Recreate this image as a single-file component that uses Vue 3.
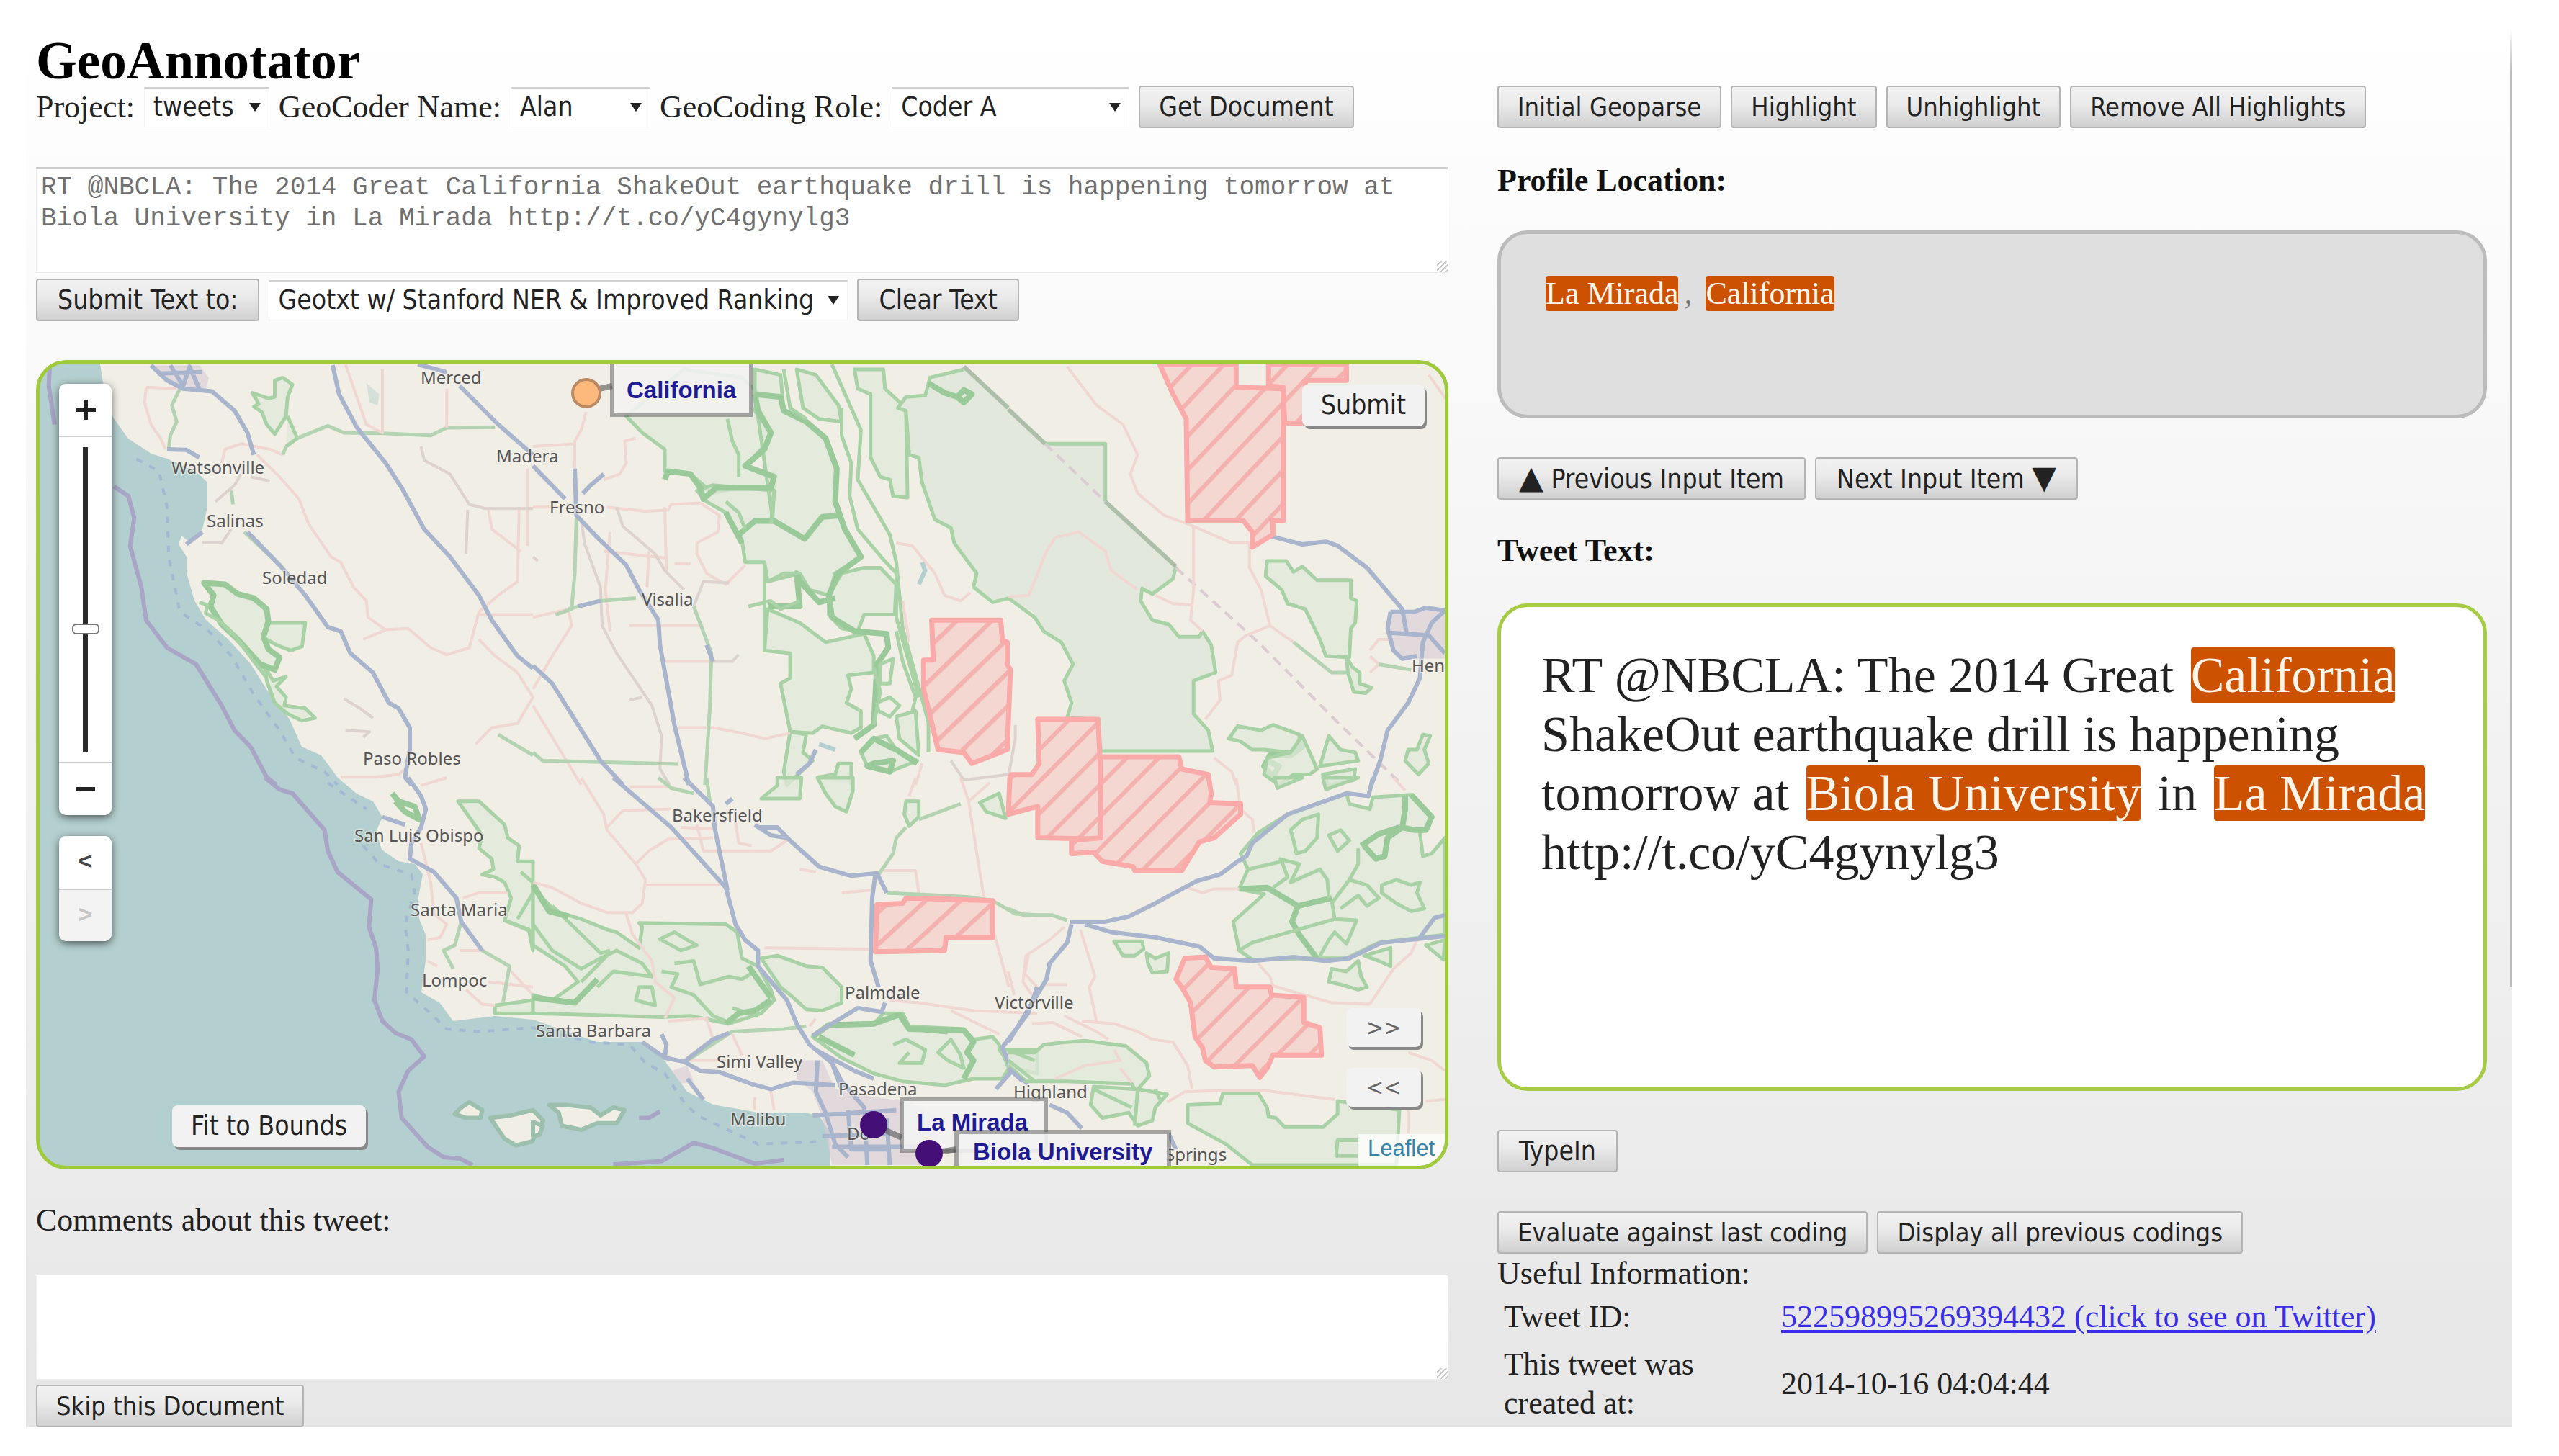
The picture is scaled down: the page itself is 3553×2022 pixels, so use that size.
<script setup>
import { ref } from 'vue'

const draft = ref('RT @NBCLA: The 2014 Great California ShakeOut earthquake drill is happening tomorrow at Biola University in La Mirada http://t.co/yC4gynylg3')
const comments = ref('')
const zoom = ref(40)

const coast = 'M139 506 L146 550 157 580 178 609 210 630 232 637 272 655 288 670 288 704 281 735 262 752 252 744 248 756 259 773 259 796 270 834 286 861 317 888 348 922 370 957 402 999 419 1037 446 1049 469 1080 495 1102 518 1113 531 1135 522 1155 530 1180 553 1196 576 1200 587 1214 580 1251 582 1276 591 1298 591 1334 585 1378 611 1393 629 1418 687 1411 740 1416 829 1447 892 1447 923 1473 941 1498 954 1516 990 1534 1052 1545 1115 1545 1137 1549 1151 1571 1153 1630 2020 1630 2020 490 139 490Z'

// Each tile keeps its own coordinate grid; origin and scale place it on the map.
const tiles = [
  {
    id: 'nw', origin: '40 490', scale: '.4464 .3827',
    shapes: [
      ['sea', 'M1050 110 L1090 150 1085 190 1060 180Z'],
      ['park', 'M765 100 L790 90 820 115 805 160 800 230 765 295 740 260 725 215 700 195 715 185 695 145 745 165 765 160Z'],
      ['park', 'M805 230 L820 270 835 310 800 340'],
      ['park', 'M545 835 L610 840 650 875 700 890 740 930 745 975 730 1030 745 1075 780 1105 765 1150 720 1140 650 1040 600 990 560 920 575 880Z'],
      ['park', 'M745 980 L860 980 850 1065 815 1080 770 1060 740 1040'],
      ['park', 'M735 1140 L760 1190 800 1175 770 1210 800 1250 795 1280 860 1290 890 1325 850 1335 805 1310 765 1270 740 1190Z'],
      ['parkbold', 'M545 835 L575 880 565 920 600 985 650 1040 720 1130 765 1150 780 1105 745 1075 730 1030 745 975 740 930 700 890 650 875 610 840Z'],
      ['parkline', 'M530 905 L555 915 550 945 590 970 640 1025 700 1120 740 1180'],
      ['green', 'M835 310 L930 265 980 290 1100 292 1250 300 1300 272 1450 270'],
      ['purple', 'M65 50 L62 120 80 260 M265 485 L310 520 328 600 315 700 350 850 365 970 430 1070 520 1130 600 1280 640 1370 690 1430 740 1540 770 1568'],
      ['dash', 'M335 385 L405 430 430 560 435 740 470 940 560 1010 630 1100 700 1240 780 1370 830 1470 920 1520 960 1568'],
      ['pink', 'M365 125 L360 180 380 260 410 310 425 350 M365 125 L460 130 M600 400 L610 350 660 330 750 350 790 370 M710 370 L780 450 840 530 870 620 940 740 970 760 1010 850 1050 900 1055 960 1110 1005 1040 1040 M1110 1005 L1180 1000 1250 1070 1300 1095 1370 1070 1400 940 1460 880 1520 830 1525 560 M985 42 L1050 260 1100 290 1100 60 M1300 272 L1300 130 M1550 420 L1550 700 M1430 570 L1440 640 1530 720 M1400 950 L1568 950 M1520 1160 L1568 1250 1520 1345 1440 1360 1390 1420 M1400 1040 L1450 1100 1520 1160 M970 1540 L1080 1540 1150 1530 1180 1500'],
      ['minor', 'M1220 340 L1230 390 1310 440 1370 550 1420 565 1568 565 M690 450 L750 465 M580 540 L640 480 660 440 M540 690 L600 690 630 640 M1365 570 L1360 730'],
      ['minor', 'M980 1255 L1030 1290 1070 1325 M985 1370 L1060 1375 1040 1395'],
      ['green', 'M435 350 L440 300 460 250 445 190 470 130 M670 650 L790 780 M1460 1385 L1568 1460 M635 550 L630 500 M800 340 L790 370'],
      ['city', 'M380 45 L430 100 480 130 550 140 560 90 530 45Z'],
      ['road', 'M380 45 L430 100 480 130 570 140 640 210 680 290 700 370 M430 350 L490 352 530 380 M440 45 L480 120 500 50 530 130 M400 75 L540 70 M490 695 L540 650'],
      ['road', 'M945 45 L965 150 1020 270 1110 400 1160 490 1230 640 1310 740 1400 880 1440 970 1520 1100 1568 1145 M1340 120 L1460 260 1568 370 M1210 42 L1300 70 M680 650 L780 770 860 880 930 995 970 1010 1000 1090 1070 1160 1120 1270 1150 1290 1185 1360 1185 1440 1170 1540 1190 1568']
    ]
  },
  {
    id: 'n', origin: '740 490', scale: '.4464 .3827',
    shapes: [
      ['park', 'M290 230 L340 290 410 350 410 430 440 430 490 440 540 490 550 510 640 490 750 500 750 440 700 430 660 410 710 350 740 290 690 210 700 145 650 90 470 60Z'],
      ['park', 'M690 60 L770 80 780 210 850 250 910 310 945 420 940 540 970 640 1020 740 940 800 920 880 860 860 830 800 730 830 720 760 660 760 650 680 600 580 540 540 510 500 560 480 750 500 745 600 690 150Z'],
      ['park', 'M820 60 L880 80 950 190 960 250 890 240 840 200Z'],
      ['park', 'M960 800 L1030 780 1080 780 1130 840 1125 950 1030 950 1010 1010 960 1000 920 950 920 880Z'],
      ['park', 'M730 930 L830 980 910 1050 1030 1020 1060 1100 1060 1160 980 1170 990 1220 975 1270 1020 1300 1020 1360 990 1380 900 1355 870 1380 800 1375 770 1200 800 1180 800 1090 720 1080Z'],
      ['park', 'M1000 60 L1090 60 1095 130 1160 200 1165 525 1120 520 1110 460 1080 450 1050 380 1050 150 1010 130Z'],
      ['area', 'M1135 200 L1160 160 1220 155 1235 90 1340 60 1568 310 1568 950 1480 890 1430 905 1370 850 1380 800 1310 690 1300 635 1250 605 1210 470 1200 380 1170 370 1160 210Z'],
      ['parkline', 'M1480 890 L1430 905 1370 850 1380 800 1310 690 1300 635 1250 605 1210 470 1200 380 1170 370 1160 210 1135 200 1160 160 1220 155 1235 90 1340 60'],
      ['park', 'M800 1375 L850 1385 840 1450 870 1480 790 1568 780 1520Z'],
      ['park', 'M1060 1400 L1100 1390 1130 1440 1195 1480 1110 1520 1040 1500 1020 1450Z'],
      ['park', 'M1130 1320 L1190 1300 1200 1460 1140 1400Z'],
      ['park', 'M885 1540 L940 1530 950 1490 990 1490 990 1568'],
      ['parkbold', 'M690 150 L770 160 780 210 850 250 910 310 945 420 940 540 970 640 1020 740 950 800 920 880 930 960 1000 1010 1100 1020 1105 1070 1070 1130 1060 1350 1000 1400'],
      ['parkbold', 'M410 460 L420 430 490 440 520 490 530 530 570 490 740 490 750 450 660 410 720 350 740 290 700 210 690 150'],
      ['parkbold', 'M640 660 L690 610 750 610 845 675 900 595 960 590 M730 920 L830 920 820 800 830 830 890 905 940 890 M600 580 L650 690'],
      ['parkline', 'M720 760 L720 1080 M730 830 L780 800 830 800 M670 920 L740 900 770 930 830 900 M740 620 L750 500 M600 540 L640 580 660 640 M605 240 L620 320 640 370 640 450'],
      ['parkline', 'M780 60 L800 200 850 240 M930 42 L1020 280 1010 460 1110 660 1130 760 1150 1000 1230 1340 1230 1450 M960 200 L960 300 990 400 985 520 1010 640 1090 750 1130 800 1130 960 1200 1250 M1060 1350 L1080 1230 1060 1140 M1080 1130 L1120 1110 1110 1200 1080 1200Z M1070 1270 L1110 1250 1140 1280 1110 1320 1075 1300Z M1130 1010 L1150 1120 1190 1250 1180 1300'],
      ['parkbold', 'M1230 110 L1280 145 1320 160 1340 180 1365 150 1340 135 1320 160 M1020 1450 L1060 1400 1110 1430 1130 1440 1195 1490 M1040 1500 L1110 1520 1120 1480 1060 1490Z'],
      ['pink', 'M165 215 L150 280 130 320 130 420 M0 340 L130 330 M320 310 L285 320 290 400 270 440 220 460 M0 560 L90 560 M230 560 L350 575 420 570 430 550 520 545 580 590 575 650 510 690 510 730 540 800 600 840 660 770 M410 560 L415 800 M220 720 L415 745 M240 650 L225 860 240 1010 M300 990 L530 990 M410 1120 L560 1120 M450 1360 L560 1360 650 1380 720 1400 800 1380 M0 960 L110 930 120 990 60 1100 0 1220 M0 1280 L150 1568 M1130 690 L1180 700 1250 800 1280 880 1330 900 1360 870 M1150 900 L1170 1050 M1210 1490 L1190 1568 M440 765 L490 765 M360 720 L355 850'],
      ['minor', 'M150 600 L160 690 210 850 215 990 260 1090 370 1280 400 1390 395 1510 425 1568 M260 560 L280 630 380 730 410 790 470 860 M0 740 L15 755 M500 920 L530 830 610 835 M300 1260 L340 1250 M560 1120 L620 1120 640 1095 M1300 1480 L1340 1550 1480 1530 1500 1400 1500 1350'],
      ['green', 'M135 600 L130 800 120 930 70 950 M110 930 L210 900 320 890 M500 920 L555 1090 550 1290 535 1568 M0 1450 L30 1480 450 1492'],
      ['road', 'M0 410 L100 530 M130 420 L135 590 200 670 290 770 330 860 390 970 395 1060 440 1350 485 1568 M0 1135 L60 1200 210 1480 280 1568 M155 510 L180 480 220 440 M210 900 L140 920 M540 1060 L560 1120 M880 1440 L860 1490 820 1530'],
      ['water', 'M1210 760 L1220 790 1200 840 M890 1420 L940 1440'],
      ['border', 'M1340 50 L1478 200'],
      ['red', 'M1240 970 L1455 970 1460 1045 1475 1050 1475 1130 1485 1150 1475 1440 1365 1490 1340 1450 1260 1440 1215 1220 1215 1115 1245 1115Z']
    ]
  },
  {
    id: 'ne', origin: '1400 490', scale: '.4082 .3827',
    shapes: [
      ['area', 'M88 304 L125 330 330 330 330 540 570 775 560 820 490 875 455 855 450 900 490 970 545 985 580 1030 650 1030 660 1010 690 1060 705 1160 630 1190 630 1310 680 1370 695 1445 315 1445 300 1330 200 1325 215 1270 190 1190 220 1130 180 1050 120 1010 90 960 88 952Z'],
      ['parkline', 'M125 330 L330 330 330 540 M570 775 L560 820 490 875 455 855 450 900 490 970 545 985 580 1030 650 1030 660 1010 690 1060 705 1160 630 1190 630 1310 680 1370 695 1445 315 1445 300 1330 200 1325 215 1270 190 1190 220 1130 180 1050 120 1010 90 960 0 890'],
      ['park', 'M880 755 L945 755 970 795 1000 775 1050 825 1165 825 1165 890 1185 900 1180 980 1165 1000 1160 1105 1080 1100 1060 1040 1010 930 950 910 930 860 875 810Z'],
      ['park', 'M1150 1105 L1170 1140 1195 1160 1195 1200 1235 1215 1215 1235 1175 1230 1155 1160Z'],
      ['park', 'M750 1400 L780 1355 860 1370 900 1350 990 1385 990 1420 960 1450 870 1440 830 1440 790 1410Z'],
      ['parkbold', 'M990 1400 L1000 1430 960 1460 890 1460 870 1500 900 1540 920 1500 880 1480'],
      ['park', 'M1000 1390 L1050 1510 1025 1530 970 1530 920 1568 870 1530 880 1470 960 1450Z'],
      ['park', 'M1090 1390 L1130 1440 1180 1450 1190 1480 1060 1500Z'],
      ['park', 'M1070 1530 L1180 1510 1175 1550 1090 1568Z'],
      ['park', 'M1410 1385 L1435 1390 1415 1440 1430 1490 1395 1530 1350 1480 1360 1440 1390 1440Z'],
      ['border', 'M0 205 L125 330 M330 540 L570 775'],
      ['dashpink', 'M125 330 L330 540 M570 780 L850 1050 1110 1330 1340 1568'],
      ['pink', 'M200 50 L300 190 390 260 440 370 415 440 440 510 530 590 620 625 760 690 820 690 820 780 860 860 890 990 810 1025 780 1050 760 1170 715 1190 720 1260 670 1330 M630 630 L630 860 620 970 660 1010 M500 880 L560 910 625 915 M0 885 L70 880 130 720 160 670 240 650 330 720 350 790 440 860 M890 990 L970 1050 M1430 80 L1490 170 M1230 1080 L1260 1040 1300 1040 M1230 1100 L1260 1130 1230 1160 M700 1470 L760 1520 775 1568'],
      ['green', 'M970 1050 L1100 1160 1150 1160 M1260 1130 L1370 1150'],
      ['city', 'M1300 940 L1485 930 1485 1110 1330 1110 1290 1020Z'],
      ['road', 'M890 665 L1000 695 1080 685 1120 700 1220 780 1340 930 1355 1020 M1300 940 L1380 940 1420 925 1485 935 M1290 1015 L1430 1025 1485 1090 M1485 935 L1440 980 1410 1050 1400 1180 1360 1270 1290 1370 1265 1480 1235 1568 M1300 940 L1290 1000 1310 1080 1340 1110 1390 1100'],
      ['red', 'M515 42 L775 42 775 125 935 130 935 610 900 610 900 660 830 705 830 650 800 610 610 610 605 240 560 150Z'],
      ['red', 'M885 42 L1150 42 1150 100 1010 100 1010 255 940 255 935 125 885 120Z']
    ]
  },
  {
    id: 'sw', origin: '40 1080', scale: '.4464 .3635',
    shapes: [
      ['park', 'M1335 90 L1400 90 1480 180 1490 230 1525 260 1520 320 1568 320 1568 660 1555 580 1480 545 1500 460 1480 400 1450 380 1410 370 1445 350 1440 310 1400 270 1410 220Z'],
      ['parkbold', 'M1130 60 L1150 90 1200 110 1215 160 1170 130 1140 90'],
      ['park', 'M1450 870 L1568 850 1568 900 1450 900Z'],
      ['parkline', 'M1520 540 L1568 440 M1480 545 L1568 590 M1530 360 L1568 400'],
      ['land', 'M1325 1285 L1345 1260 1370 1240 1410 1270 1405 1300 1360 1300Z'],
      ['land', 'M1435 1300 L1500 1290 1568 1270 1600 1310 1565 1390 1515 1405 1480 1380Z'],
      ['purple', 'M735 0 L780 45 820 60 920 200 930 280 960 360 1065 465 1058 570 1080 650 1085 730 1075 850 1100 930 1140 975 1190 1000 1230 1065 1180 1120 1150 1200 1160 1300 1240 1410 1290 1450 1340 1455 1380 1480'],
      ['dash', 'M930 20 L1050 120 M1040 260 L1090 330 1190 370 1200 440 1170 560 1180 660 1175 820 1240 890 1300 960 1400 970 1568 955'],
      ['pink', 'M1220 250 L1250 400 1260 520 1300 560 1280 610 1240 620 M1220 30 L1300 0 M1350 460 L1400 440 1490 440 M1340 660 L1420 660 M1430 780 L1568 800 M1500 740 L1568 830 M1360 810 L1410 865 1450 870 M1240 700 L1270 720'],
      ['green', 'M1345 550 L1325 640 1290 660 1320 730 M1410 660 L1495 720 1475 860'],
      ['road', 'M1180 0 L1220 70 1235 120 1220 190 1190 250 1185 310 1260 360 1330 460 1345 550 1410 660 M1100 150 L1170 180']
    ]
  },
  {
    id: 's', origin: '740 1080', scale: '.4464 .3635',
    shapes: [
      ['park', 'M710 80 L760 30 760 0 835 0 830 80Z'],
      ['park', 'M885 0 L995 0 995 50 975 130 940 110 910 60Z'],
      ['park', 'M1160 90 L1200 90 1200 150 1170 185 1155 140Z'],
      ['park', 'M1390 95 L1450 60 1470 155 1410 130Z'],
      ['park', 'M0 400 L30 460 70 510 150 540 230 580 260 590 330 650 340 570 330 555 600 560 635 590 650 690 700 720 740 810 750 850 710 900 610 940 490 910 400 915 0 900 0 830 60 850 140 780 100 720 0 640Z'],
      ['parkline', 'M0 560 L60 660 150 730 210 690 260 660 340 710 370 760 250 740 200 800 M150 780 L230 680 M60 490 L210 670 240 660 M390 620 L440 590 480 620 510 640 460 660 400 620 M440 710 L500 700 520 790 610 760 650 770 690 740 M400 740 L450 750 430 800 500 830 560 910 600 930 M330 800 L370 800 380 870 320 850Z M620 880 L700 910'],
      ['parkbold', 'M670 720 L740 840 M600 940 L640 900 690 890 740 850 M0 840 L130 860 200 770 M0 410 L50 510 110 530'],
      ['park', 'M710 690 L760 680 850 720 900 725 960 800 960 860 900 890 850 885 800 830 770 800Z'],
      ['park', 'M870 990 L920 940 1060 940 1090 900 1150 900 1170 950 1340 960 1370 1000 1430 990 1450 1020 1480 1110 1460 1150 1370 1150 1280 1175 1150 1160 1060 1130 960 1070Z'],
      ['parkbold', 'M870 990 L920 945 1060 940 1140 905 1170 960 1340 965 1370 1010 1350 1050 1370 1080 1340 1150 M890 990 L1000 1060 M1290 970 L1200 960'],
      ['parkline', 'M1120 1020 L1160 1000 1220 1040 1210 1090 1140 1090 1170 1050 M1260 1050 L1300 1000 1330 1060 1340 1110 1290 1080Z'],
      ['park', 'M1450 1040 L1568 1040 1568 1130 1500 1110Z'],
      ['land', 'M50 1250 L100 1250 180 1260 210 1290 250 1260 285 1270 260 1320 200 1320 150 1345 90 1330 80 1280Z'],
      ['land', 'M0 1315 L30 1330 20 1365 0 1370Z'],
      ['purple', 'M250 1478 L400 1465 500 1395 560 1415 690 1475 780 1460 M330 1300 L360 1300 395 1275'],
      ['dash', 'M0 955 L180 1010 300 1020 350 1090 410 1130 470 1240 510 1290 700 1400 900 1390'],
      ['city', 'M820 1080 L900 1080 940 1190 1060 1220 1180 1240 1260 1300 1260 1480 930 1480 900 1300 870 1200 820 1150Z'],
      ['city', 'M430 1120 L480 1100 500 1160 460 1170Z'],
      ['pink', 'M150 0 L220 140 230 200 320 330 350 390 340 480 310 515 230 515 150 480 60 420 0 400 M230 190 L280 125 430 120 M320 330 L360 280 420 235 560 230 M350 410 L580 410 M290 520 L310 600 370 700 380 780 440 840 410 920 M720 650 L1050 655 M510 180 L530 280 740 280 790 240 M630 170 L640 250 680 260 M460 190 L560 195 M300 35 L430 35 M1090 355 L1190 355 1200 440 M1190 0 L1170 70 M1330 0 L1355 90 1400 440 1480 800 M1355 90 L1420 20 M830 350 L880 360 M960 440 L1050 430 M420 930 L540 920 560 1000 480 1070 M620 980 L650 1060 M480 1080 L600 1080 M1110 850 L1200 860 1370 890 1568 900 M1300 890 L1450 980 M690 1270 L690 1220 M750 1270 L740 1200 M880 920 L860 950 M1540 680 L1530 750 1568 800'],
      ['green', 'M540 0 L550 90 M1200 160 L1330 100 M1160 190 L1130 230 1120 290 1075 370 M480 1080 L620 970 780 960 850 950 M1100 440 L1350 455 1430 470 1500 520 1568 525 M390 0 L430 40 500 60'],
      ['road', 'M250 0 L430 190 600 420 630 560 660 620 700 660 700 720 790 850 820 940 860 1020 930 1090 960 1190 M470 0 L560 110 565 190 605 430 M690 180 L740 220 790 230 890 340 990 375 1070 365 1100 440 M700 190 L760 190 800 240 M1065 370 L1055 460 1050 700 1075 800 M1095 860 L1085 895 1010 880 870 985 M340 1010 L410 1070 470 1085 520 1120 580 1125 680 1170 740 1190 810 1165 940 1175 M410 1070 L415 1020 400 980 M470 1085 L560 1000 610 975 M880 1040 L1000 1120 1060 1150 M885 1080 L880 1200 910 1280 940 1400 980 1450 M930 1090 L960 1160 1030 1260 1040 1480 M870 1290 L1130 1270 M1568 800 L1540 900 1460 1030 1490 1120 1440 1190 M900 1370 L1100 1360 M980 1270 L990 1420 1110 1420 M930 1410 L1260 1410 M1100 1300 L1110 1480 M1490 1120 L1540 1170 M480 1150 L530 1230 M600 100 L620 80'],
      ['red', 'M1070 485 L1150 480 1160 460 1430 470 1430 610 1285 610 1280 660 1065 665Z']
    ]
  },
  {
    id: 'se', origin: '1400 1080', scale: '.4082 .3635',
    shapes: [
      ['park', 'M905 0 L1000 0 915 40Z M1070 0 L1190 0 1080 45Z'],
      ['park', 'M790 290 L850 210 950 140 1150 60 1160 100 1230 120 1240 75 1370 65 1440 150 1430 190 1400 210 1410 300 1440 290 1485 230 1485 600 1260 630 1150 690 1050 690 830 695 785 660 765 550 870 445 785 425 815 350Z'],
      ['parkbold', 'M785 425 L880 420 985 490 965 550 990 600 1050 690 M1370 65 L1440 150 1420 200 1380 200 1340 190 1350 120 1350 70 M1200 260 L1260 215 1330 190 M985 490 L1100 460 M1210 260 L1250 310 1280 300 1290 230 1340 190'],
      ['parkline', 'M960 200 L1000 160 1055 140 1050 230 1010 280 980 290 970 240Z M1090 220 L1130 200 1160 240 1120 280Z M815 350 L930 320 950 380 900 420 M920 310 L990 330 960 400 1060 350 1085 390 1090 460 M1100 480 L1160 390 1220 410 1260 460 1220 490 1190 450 1130 500 M1270 410 L1320 390 1370 410 1400 400 1390 440 1415 500 1370 510 1320 480 1270 440Z M785 660 L830 630 1110 540 M1110 540 L1185 545 1150 635 1110 590 1090 620 1060 680 M1190 270 L1190 330 1160 390 M1100 470 L1110 540'],
      ['park', 'M360 625 L455 625 460 655 430 680 390 680Z'],
      ['park', 'M470 670 L500 690 545 670 540 740 490 745 475 710Z'],
      ['park', 'M1100 730 L1150 740 1190 700 1200 760 1220 800 1190 810 1130 790 1090 780Z'],
      ['park', 'M1210 680 L1300 650 1300 720 1260 700Z M1420 640 L1485 620 1480 695Z'],
      ['park', 'M0 1050 L90 1050 120 1020 200 1010 260 1005 400 1025 470 1090 480 1140 440 1190 540 1210 500 1260 490 1310 440 1330 410 1280 320 1300 280 1250 290 1180 430 1190 420 1170 200 1160 60 1160 0 1100'],
      ['parkline', 'M440 1190 L430 1330 M290 1190 L420 1260 M500 1190 L520 1240 M0 1080 L90 1160 M20 1050 L90 1080'],
      ['park', 'M610 1250 L720 1245 730 1205 850 1205 880 1260 885 1295 910 1300 940 1335 1070 1335 1120 1285 1120 1235 1330 1270 1320 1480 830 1480 740 1400 610 1320Z'],
      ['park', 'M1190 1385 L1120 1385 1115 1445 1190 1445'],
      ['pink', 'M775 0 L790 120 830 160 835 210 M610 420 L660 440 700 425 785 425 M190 570 L140 620 60 680 50 780 80 830 M245 580 L295 760 275 800 300 930 M0 740 L20 830 M120 790 L200 790 M190 910 L300 970 340 1000 M80 940 L150 935 250 990 M250 930 L360 940 440 970 490 1000 560 1010 610 1100 625 1190 M540 1240 L600 1200 720 1195 870 1195 1110 1230 M900 795 L1100 860 1230 865 M850 710 L890 760 900 795 M1230 865 L1310 730 1370 670 1390 620 M1360 1050 L1440 1080 1485 1120 M1360 1270 L1360 1360 M1420 1235 L1485 1230 M1310 0 L1350 50 M160 1150 L260 1100 380 1080 360 1040 M380 1110 L420 1165'],
      ['green', 'M0 500 L50 525 150 525 200 545'],
      ['road', 'M1240 0 L1225 70 1150 60 950 140 830 250 810 300 780 320 720 370 640 395 500 480 410 530 330 550 210 550 M260 560 L350 590 500 610 650 645 700 690 830 700 970 685 1080 700 1160 690 1270 630 1485 605 M215 560 L200 630 140 710 130 770 60 900 0 1010 M1400 610 L1450 535 1485 525 M140 1250 L200 1280 250 1340 M0 1110 L50 1160 M545 1360 L570 1420'],
      ['red', 'M100 -223 L305 -223 315 0 315 235 100 230 100 110 0 140 5 0 10 -12 80 -12 105 -54Z'],
      ['red', 'M312 -80 L580 -80 590 -33 680 -12 690 60 685 95 790 100 790 140 700 230 650 245 590 355 430 355 425 340 320 320 290 285 215 290 215 240 315 230Z'],
      ['red', 'M600 690 L670 685 690 725 770 730 775 800 890 800 895 830 1005 840 1005 935 1060 955 1065 1060 900 1060 880 1110 855 1145 830 1100 700 1105 670 1080 660 1030 635 990 620 860 590 800 570 770Z']
    ]
  }
]

const places = [
  ['Merced', 584, 533], ['Watsonville', 238, 658], ['Madera', 689, 642], ['Salinas', 287, 732],
  ['Fresno', 763, 713], ['Soledad', 364, 811], ['Visalia', 891, 841], ['Hen', 1960, 933],
  ['Paso Robles', 504, 1062], ['Bakersfield', 933, 1141], ['San Luis Obispo', 492, 1169],
  ['Santa Maria', 570, 1272], ['Lompoc', 586, 1370], ['Palmdale', 1173, 1387], ['Victorville', 1381, 1401],
  ['Santa Barbara', 744, 1440], ['Simi Valley', 995, 1483], ['Pasadena', 1164, 1521],
  ['Highland', 1407, 1525], ['Malibu', 1014, 1563], ['Do', 1176, 1583], ['Springs', 1618, 1612]
]
</script>

<template>
  <main class="page">
    <section class="left">
      <h1>GeoAnnotator</h1>
      <div class="row">
        <label for="project">Project:</label>
        <span class="pick pick-project">
          <select id="project"><option>tweets</option></select>
          <svg viewBox="0 0 16 12" aria-hidden="true"><path d="M0 0H16L8 12Z" /></svg>
        </span>
        <label for="coder">GeoCoder Name:</label>
        <span class="pick pick-coder">
          <select id="coder"><option>Alan</option></select>
          <svg viewBox="0 0 16 12" aria-hidden="true"><path d="M0 0H16L8 12Z" /></svg>
        </span>
        <label for="role">GeoCoding Role:</label>
        <span class="pick pick-role">
          <select id="role"><option>Coder A</option></select>
          <svg viewBox="0 0 16 12" aria-hidden="true"><path d="M0 0H16L8 12Z" /></svg>
        </span>
        <button type="button" class="btn">Get Document</button>
      </div>

      <textarea v-model="draft" class="box draft" aria-label="Text to geoparse"></textarea>

      <div class="row row-submit">
        <button type="button" class="btn wide">Submit Text to:</button>
        <span class="pick pick-engine">
          <select aria-label="Geoparser"><option>Geotxt w/ Stanford NER &amp; Improved Ranking</option></select>
          <svg viewBox="0 0 16 12" aria-hidden="true"><path d="M0 0H16L8 12Z" /></svg>
        </span>
        <button type="button" class="btn wide">Clear Text</button>
      </div>

      <div class="map">
        <svg class="canvas" viewBox="55 505 1951 1114" preserveAspectRatio="xMidYMid slice">
          <defs>
            <pattern id="hatch" width="32" height="32" patternUnits="userSpaceOnUse" patternTransform="scale(2.4 2.7) rotate(45)">
              <rect width="32" height="32" fill="#f5d7d1" />
              <rect width="6" height="32" fill="#f4b2af" />
            </pattern>
          </defs>
          <path :d="coast" fill="#f1eee6" />
          <g v-for="tile in tiles" :key="tile.id" :transform="`translate(${tile.origin}) scale(${tile.scale})`">
            <path v-for="(s, i) in tile.shapes" :key="i" :class="s[0]" :d="s[1]" />
          </g>
          <g class="places">
            <text v-for="p in places" :key="p[0]" :x="p[1]" :y="p[2]">{{ p[0] }}</text>
          </g>
          <g class="tags">
            <rect x="850" y="498" width="193" height="78" />
            <path d="M832 540 L850 536" />
            <circle class="state" cx="814" cy="546" r="19" />
            <text x="870" y="553">California</text>
            <path d="M1213 1562 L1252 1580" />
            <rect x="1252" y="1526" width="200" height="72" />
            <circle class="city-pin" cx="1213" cy="1562" r="19" />
            <path d="M1290 1602 L1328 1596" />
            <rect x="1328" y="1572" width="295" height="72" />
            <circle class="city-pin" cx="1290" cy="1602" r="19" />
            <text x="1273" y="1570">La Mirada</text>
            <text x="1351" y="1611">Biola University</text>
          </g>
        </svg>

        <div class="controls">
          <div class="bar">
            <button type="button" class="zoom-in" aria-label="Zoom in"><svg viewBox="0 0 28 28"><path d="M14 0V28M0 14H28" /></svg></button>
            <div class="track"><input v-model="zoom" type="range" min="0" max="100" aria-label="Zoom level"></div>
            <button type="button" class="zoom-out" aria-label="Zoom out"><svg viewBox="0 0 28 28"><path d="M1 14H27" /></svg></button>
          </div>
          <div class="bar">
            <button type="button" class="step">&lt;</button>
            <button type="button" class="step" disabled>&gt;</button>
          </div>
        </div>
        <button type="button" class="float submit">Submit</button>
        <button type="button" class="float fit">Fit to Bounds</button>
        <div class="pager">
          <button type="button" class="float">&gt;&gt;</button>
          <button type="button" class="float">&lt;&lt;</button>
        </div>
        <a class="credit" href="#">Leaflet</a>
      </div>

      <label class="comments-label" for="comments">Comments about this tweet:</label>
      <textarea id="comments" v-model="comments" class="box comments"></textarea>
      <button type="button" class="btn small skip">Skip this Document</button>
    </section>

    <section class="right">
      <div class="row">
        <button type="button" class="btn small">Initial Geoparse</button>
        <button type="button" class="btn small">Highlight</button>
        <button type="button" class="btn small">Unhighlight</button>
        <button type="button" class="btn small">Remove All Highlights</button>
      </div>
      <h2>Profile Location:</h2>
      <div class="profile"><mark>La Mirada</mark>, <mark>California</mark></div>
      <div class="row row-nav">
        <button type="button" class="btn wide"><span>▲</span> Previous Input Item</button>
        <button type="button" class="btn wide">Next Input Item <span>▼</span></button>
      </div>
      <h2 class="tweet-title">Tweet Text:</h2>
      <div class="tweet">RT @NBCLA: The 2014 Great <mark>California</mark> ShakeOut earthquake drill is happening tomorrow at <mark>Biola University</mark> in <mark>La Mirada</mark> http://t.co/yC4gynylg3</div>
      <div class="row row-type"><button type="button" class="btn wide">TypeIn</button></div>
      <div class="row row-type">
        <button type="button" class="btn small">Evaluate against last coding</button>
        <button type="button" class="btn small">Display all previous codings</button>
      </div>
      <p class="info">Useful Information:</p>
      <table>
        <tbody>
          <tr><th scope="row">Tweet ID:</th><td><a href="#">522598995269394432 (click to see on Twitter)</a></td></tr>
          <tr><th scope="row">This tweet was created at:</th><td>2014-10-16 04:04:44</td></tr>
        </tbody>
      </table>
    </section>
  </main>
</template>

<style>
body { background: #fff; }
</style>

<style scoped>
* { box-sizing: border-box; }
.page {
  display: grid;
  grid-template-columns: minmax(0, 1961fr) minmax(0, 1374fr);
  column-gap: 68px;
  margin: 40px 65px 38px 36px;
  padding: 0 35px 0 14px;
  background: linear-gradient(#fff0, #bbb 60px) right top / 3px 1330px no-repeat, linear-gradient(#fff, #fcfcfc 12%, #f5f5f5 40%, #ededed 75%, #e6e6e6);
  color: #222;
  font: 44px/50px "Liberation Serif", "Times New Roman", serif;
}
.left { display: flex; flex-direction: column; align-items: stretch; padding-top: 11px; }
.right { padding-top: 79px; }
h1 { margin: 0; font-size: 73px; line-height: 68px; color: #000; }
h2 { margin: 48px 0 44px; font-size: 44px; line-height: 50px; color: #111; }
.row { display: flex; align-items: center; gap: 13px; }
.row label { white-space: nowrap; }

.btn, .float, select { font: 37px/44px "DejaVu Sans Condensed", Tahoma, "Noto Sans", sans-serif; color: #222; white-space: nowrap; }
.btn {
  height: 59px;
  padding: 2px 26px;
  border: 2px solid #b4b4b4;
  border-radius: 4px;
  background: linear-gradient(#f2f2f2, #ebebeb 40%, #d0d0d0);
}
.small { font-size: 36px; }
.wide { padding: 2px 28px; }
.pick { position: relative; display: flex; }
.pick select {
  appearance: none;
  width: 100%;
  height: 56px;
  padding: 0 0 0 12px;
  border: 1px solid #f2f2f2;
  border-top: 2px solid #d0d0d0;
  border-radius: 0;
  background: #fff;
}
.pick svg { position: absolute; right: 12px; top: 22px; width: 16px; height: 12px; fill: #222; pointer-events: none; }
.pick-project { width: 174px; }
.pick-coder { width: 194px; }
.pick-role { width: 330px; }
.pick-engine { width: 804px; }

.box {
  display: block;
  width: 100%;
  margin: 0;
  padding: 4px 6px;
  border: 1px solid #eee;
  border-top: 3px solid #ccc;
  background: #fff;
  color: #707070;
  font: 36px/43px "Liberation Mono", "Courier New", monospace;
  resize: vertical;
}
.box::-webkit-resizer { background: repeating-linear-gradient(135deg, #fff 0 3px, #ccc 3px 5px); clip-path: polygon(100% 0, 100% 100%, 0 100%); }
.draft { height: 147px; margin-top: 54px; }
.row-submit { margin-top: 8px; }
.comments-label { margin-top: 46px; }
.comments { height: 146px; margin-top: 50px; border-top: 1px solid #ddd; }
.skip { align-self: flex-start; margin-top: 7px; }

.map {
  position: relative;
  margin-top: 54px;
  aspect-ratio: 1961 / 1124;
  border: 5px solid #9fca3a;
  border-radius: 42px;
  overflow: hidden;
  background: #b4cfcf;
}
.canvas { display: block; width: 100%; height: 100%; }
.canvas path { vector-effect: non-scaling-stroke; stroke-linejoin: round; }
.parkline, .parkbold, .pink, .minor, .green, .road, .purple, .dash, .dashpink, .border, .water { fill: none; }
.area { fill: #e3e8dc; }
.park { fill: #dfe8d8; fill-opacity: .75; stroke: #a8d1a6; stroke-width: 5; }
.parkline { stroke: #a9d2a6; stroke-width: 5; }
.parkbold { stroke: #9aca9a; stroke-width: 8; }
.pink { stroke: #f0d7d2; stroke-width: 4; }
.minor { stroke: #ddd2cd; stroke-width: 4; }
.green { stroke: #b4d3b2; stroke-width: 5; }
.road { stroke: #a9b5cd; stroke-width: 6; }
.water { stroke: #b4cfd0; stroke-width: 6; }
.sea { fill: #d5e0da; }
.city { fill: #d9cbd5; fill-opacity: .6; }
.land { fill: #f1eee6; stroke: #9dbfae; stroke-width: 6; }
.purple { stroke: #a9a5c6; stroke-width: 6; }
.dash { stroke: #a0bad3; stroke-width: 4; stroke-dasharray: 9 11; }
.dashpink { stroke: #dccbd3; stroke-width: 4; stroke-dasharray: 14 9; }
.border { stroke: #aebfa9; stroke-width: 6; }
.red { fill: url(#hatch); stroke: #f9aaa9; stroke-width: 7; }
.places text { font: 24px "Noto Sans", "Open Sans", sans-serif; fill: #555; paint-order: stroke; stroke: #f4f1ea; stroke-width: 3; stroke-opacity: .6; }
.tags rect { fill: #f3f2f2; fill-opacity: .88; stroke: #555; stroke-opacity: .5; stroke-width: 6; }
.tags path { stroke: #555; stroke-opacity: .6; stroke-width: 8; fill: none; }
.tags text { font: bold 33px "Liberation Sans", Arial, sans-serif; fill: #1f1b92; }
.state { fill: #fdb97c; stroke: #b98a63; stroke-width: 4; }
.city-pin { fill: #430f76; }

.controls { position: absolute; left: 27px; top: 28px; display: flex; flex-direction: column; gap: 29px; }
.bar { display: flex; flex-direction: column; width: 73px; border-radius: 10px; background: #fff; box-shadow: 0 3px 12px #0009; overflow: hidden; }
.bar button { display: flex; align-items: center; justify-content: center; height: 72px; padding: 0; border: 0; background: #fff; color: #333; }
.bar svg { width: 28px; height: 28px; }
.bar svg path { stroke: #222; stroke-width: 6; fill: none; }
.track { display: flex; justify-content: center; padding: 14px 0; border: solid #ccc; border-width: 2px 0; }
.track input {
  appearance: none;
  writing-mode: vertical-lr;
  direction: rtl;
  width: 36px;
  height: 423px;
  margin: 0;
  background: linear-gradient(#2a2a2a, #2a2a2a) center / 7px 100% no-repeat;
}
.track input::-webkit-slider-thumb { appearance: none; width: 38px; height: 15px; border: 2px solid #777; border-radius: 6px; background: #fff; }
.bar .step { height: 73px; padding-bottom: 6px; font: bold 34px/40px "Liberation Sans", Arial, sans-serif; color: #444; }
.bar .step + .step { border-top: 2px solid #ccc; background: #f3f3f3; color: #c4c4c4; }
.float {
  height: 58px;
  padding: 0 26px;
  border: 0;
  border-radius: 8px;
  background: #f3f2f2;
  box-shadow: 3px 4px 0 #888;
}
.submit { position: absolute; top: 29px; right: 28px; }
.fit { position: absolute; left: 184px; bottom: 26px; }
.pager { position: absolute; right: 33px; bottom: 82px; display: flex; flex-direction: column; gap: 29px; }
.pager .float { width: 104px; height: 54px; padding: 0; color: #666; font-size: 32px; }
.credit { position: absolute; right: 0; bottom: 0; padding: 2px 14px 6px; background: #fffb; color: #3387ad; font: 31px/36px "Liberation Sans", Arial, sans-serif; text-decoration: none; }

mark { border-radius: 4px; background: #cc5202; color: #fff5ea; }
.profile { height: 261px; padding: 58px 62px; border: 5px solid #bcbcbc; border-radius: 42px; background: #dfdfdf; color: #777; }
.profile mark { margin-right: 8px; }
.profile mark + mark { margin-left: 8px; }
.row-nav { margin-top: 54px; }
.row-nav span { font-family: "DejaVu Sans", sans-serif; font-size: 44px; line-height: 44px; }
.tweet-title { margin: 46px 0 48px; }
.tweet { height: 677px; padding: 54px 50px 54px 56px; border: 5px solid #a6cb45; border-radius: 42px; background: #fff; font-size: 70px; line-height: 82px; }
.tweet mark { margin: 0 6px; }
.row-type { margin-top: 54px; }
.info { margin: 3px 0 8px; }
table { width: 100%; margin-left: 9px; border-collapse: collapse; table-layout: fixed; line-height: 54px; }
th, td { padding: 0 0 12px; text-align: left; vertical-align: middle; font-weight: normal; }
th { width: 385px; padding-right: 40px; }
tr:last-child th, tr:last-child td { padding-bottom: 6px; }
td a { color: #3a2ee8; text-underline-offset: 4px; }
</style>
